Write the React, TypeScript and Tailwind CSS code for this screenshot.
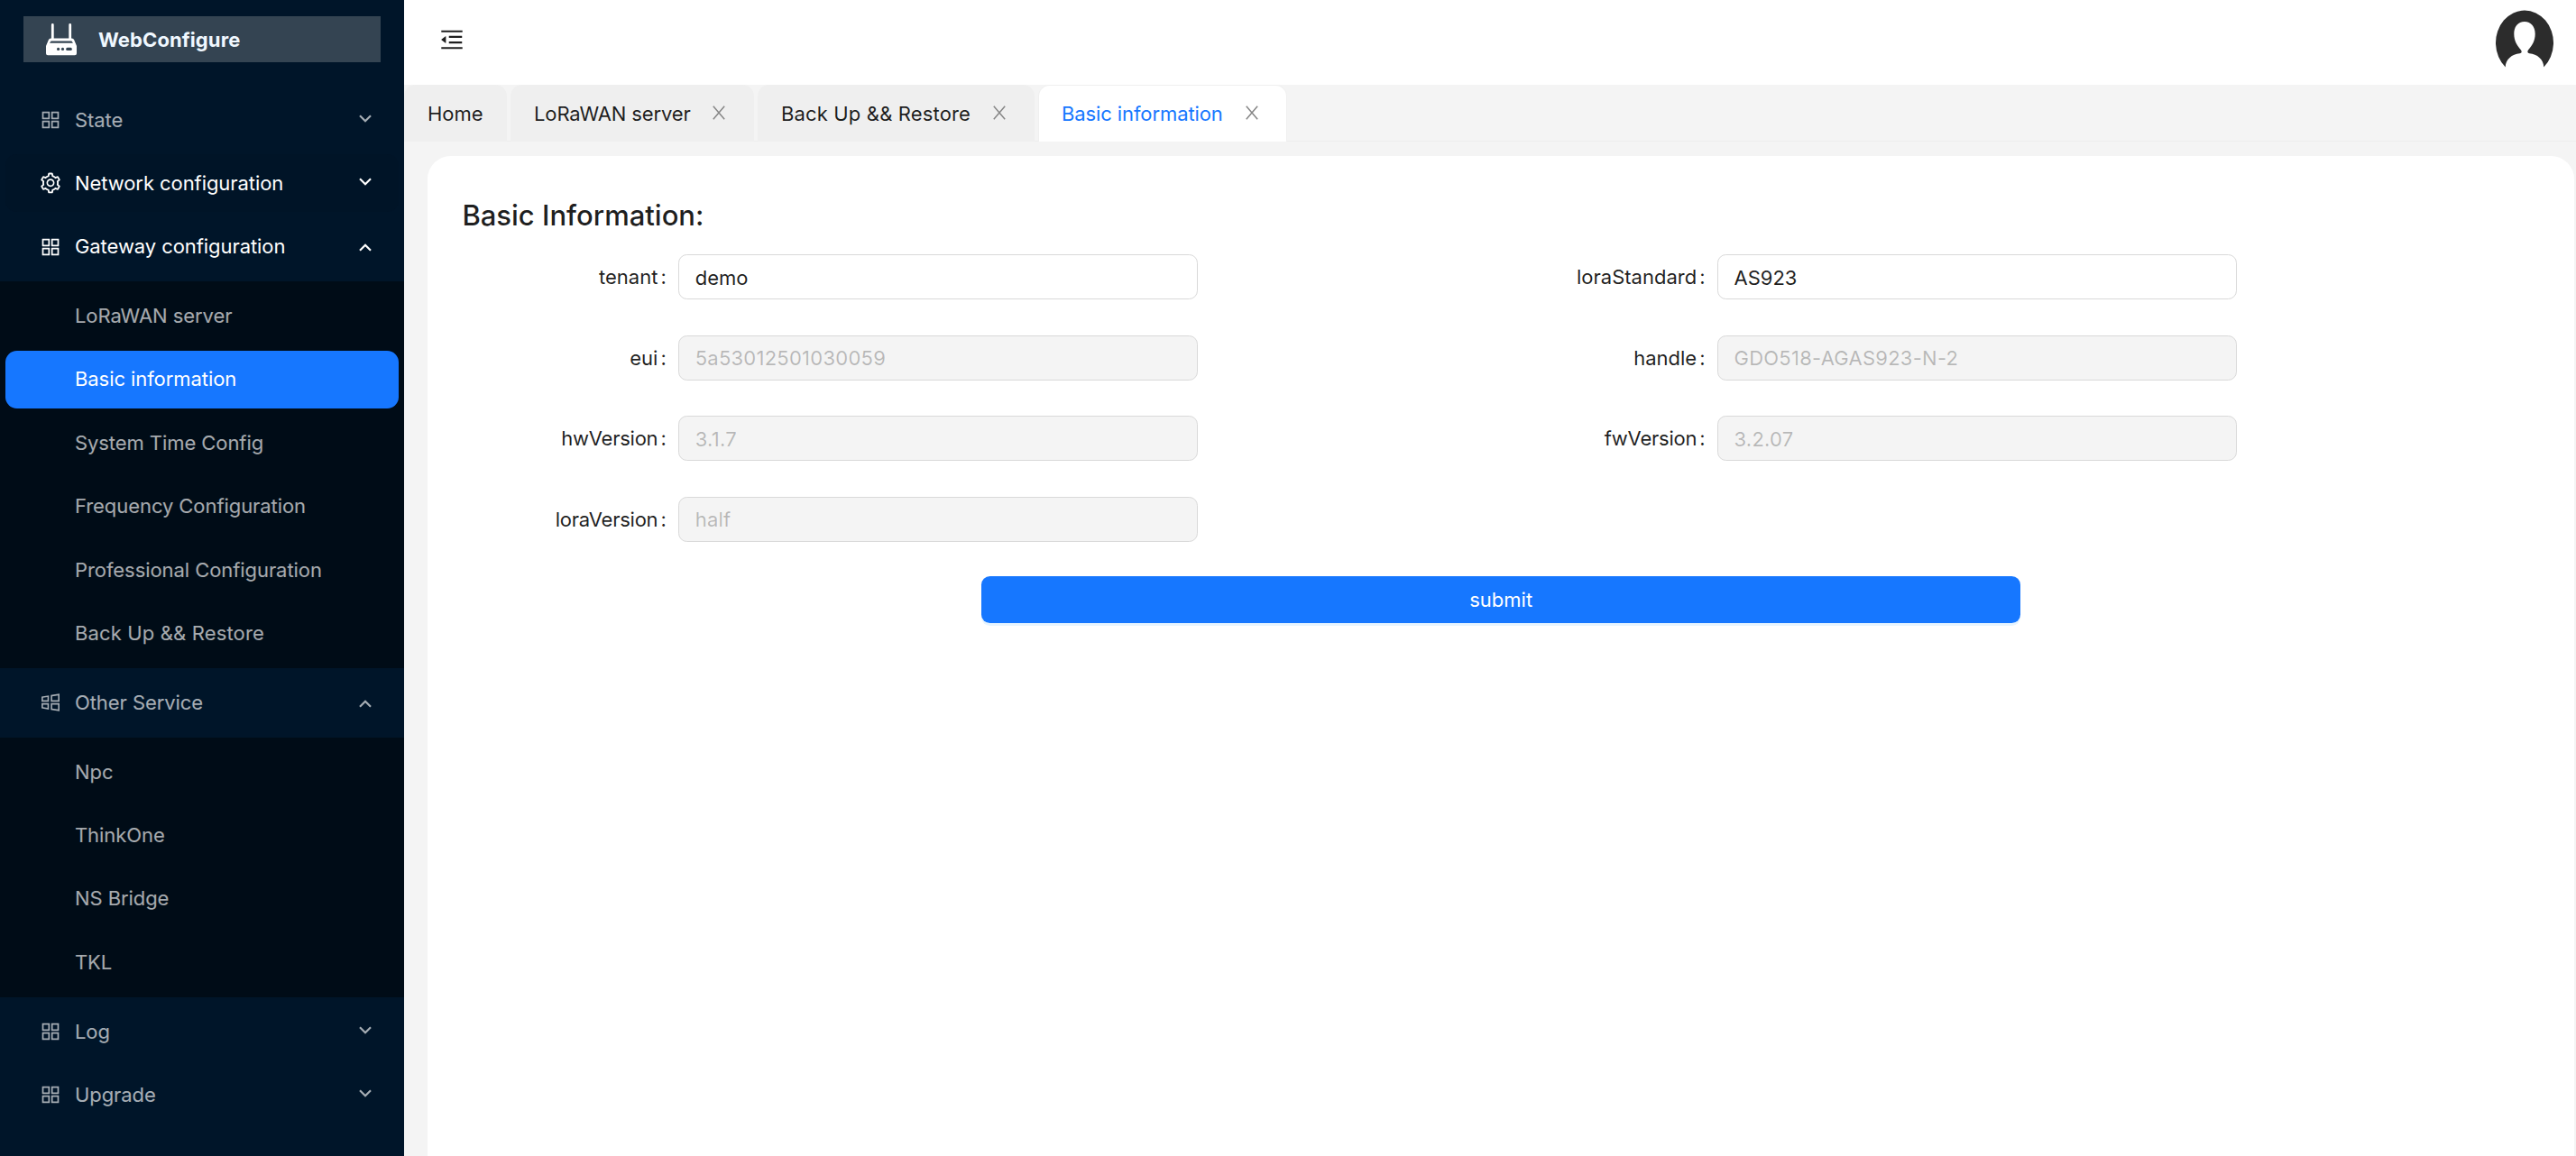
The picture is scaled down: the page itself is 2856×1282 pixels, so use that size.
import React, { useState } from 'react';
import { AiOutlineAppstore, AiOutlineMenuFold, AiOutlineSetting, AiOutlineWindows } from 'react-icons/ai';
import { clsx } from 'clsx';

interface MenuEntry {
  label: string;
  icon: React.ComponentType<{ className?: string }>;
  highlighted?: boolean;
  hovered?: boolean;
  children?: string[];
}

interface Tab {
  label: string;
  width: string;
  closable: boolean;
}

interface Field {
  name: string;
  value: string;
  disabled: boolean;
}

const menu: MenuEntry[] = [
  { label: 'State', icon: AiOutlineAppstore },
  { label: 'Network configuration', icon: AiOutlineSetting, highlighted: true, hovered: true },
  {
    label: 'Gateway configuration',
    icon: AiOutlineAppstore,
    highlighted: true,
    children: [
      'LoRaWAN server',
      'Basic information',
      'System Time Config',
      'Frequency Configuration',
      'Professional Configuration',
      'Back Up && Restore'
    ]
  },
  {
    label: 'Other Service',
    icon: AiOutlineWindows,
    children: ['Npc', 'ThinkOne', 'NS Bridge', 'TKL']
  },
  { label: 'Log', icon: AiOutlineAppstore },
  { label: 'Upgrade', icon: AiOutlineAppstore }
];

const tabs: Tab[] = [
  { label: 'Home', width: 'w-[114px]', closable: false },
  { label: 'LoRaWAN server', width: 'w-[270px] tracking-[-0.12px]', closable: true },
  { label: 'Back Up && Restore', width: 'w-[307px] tracking-[0.15px]', closable: true },
  { label: 'Basic information', width: 'w-[276px] tracking-[-0.1px]', closable: true }
];

const fields: Field[] = [
  { name: 'tenant', value: 'demo', disabled: false },
  { name: 'loraStandard', value: 'AS923', disabled: false },
  { name: 'eui', value: '5a53012501030059', disabled: true },
  { name: 'handle', value: 'GDO518-AGAS923-N-2', disabled: true },
  { name: 'hwVersion', value: '3.1.7', disabled: true },
  { name: 'fwVersion', value: '3.2.07', disabled: true },
  { name: 'loraVersion', value: 'half', disabled: true }
];

const RouterLogo = () => (
  <svg width="34" height="36" viewBox="0 0 34 36" className="shrink-0">
    <path d="M7.3 1.4V18M26.7 1.4V18" stroke="#fff" strokeWidth="2.8" strokeLinecap="round" />
    <path
      d="M5.5 16.5h23a3 3 0 0 1 2.8 2L34 25v8.3a2 2 0 0 1-2 2H2a2 2 0 0 1-2-2V25l2.7-6.5a3 3 0 0 1 2.8-2Z"
      fill="#fff"
    />
    <path d="M5.6 19.4h22.8l1.6 2.4H4Z" fill="#344452" />
    <circle cx="13.6" cy="28.4" r="1.6" fill="#344452" />
    <circle cx="18.5" cy="28.4" r="1.6" fill="#344452" />
    <path d="M23.7 28.4h3.6" stroke="#344452" strokeWidth="3.1" strokeLinecap="round" />
  </svg>
);

const Avatar = () => (
  <svg width="64" height="64" viewBox="0 0 64 64">
    <path
      d="M10.8 63.5A32 36 0 1 1 53.2 63.5C53.6 56 46 48.6 37.5 48.3C35.2 48 34.8 46.2 36 44.4C40.5 39.5 43.7 34 43.7 26.5C43.7 18.5 39 13 32 13S20.3 18.5 20.3 26.5C20.3 34 23.5 39.5 28 44.4C29.2 46.2 28.8 48 26.5 48.3C18 48.6 10.4 56 10.8 63.5Z"
      fill="#2c2c2c"
    />
  </svg>
);

const CloseIcon = () => (
  <svg width="14" height="16" viewBox="0 0 14 16" className="-mt-[2px]">
    <path d="M.8 .8L13.2 15.2M13.2 .8L.8 15.2" stroke="#868686" strokeWidth="1.5" />
  </svg>
);

const Chevron = ({ up }: { up: boolean }) => (
  <svg
    width="14"
    height="9"
    viewBox="0 0 14 9"
    fill="none"
    stroke="currentColor"
    strokeWidth="2.2"
    className={up ? 'mt-[2px]' : '-mt-[4px]'}
  >
    <path d={up ? 'M1 7.8L7 1.8L13 7.8' : 'M1 1.2L7 7.2L13 1.2'} />
  </svg>
);

const MenuSection = ({
  entry,
  selected,
  onSelect
}: {
  entry: MenuEntry;
  selected: string;
  onSelect: (label: string) => void;
}) => {
  const Icon = entry.icon;

  return (
    <>
      <div
        className={clsx(
          'mx-[6.4px] flex h-16 items-center rounded-[12.8px] pr-[30px] pl-[37px]',
          entry.highlighted ? 'text-white' : 'text-white/65',
          entry.hovered && 'bg-[#001427]'
        )}
      >
        <Icon className="size-[26px] shrink-0" />
        <span className="ml-[13.6px] flex-1">{entry.label}</span>
        <Chevron up={!!entry.children} />
      </div>
      {entry.children && (
        <div className="flex flex-col gap-[6.4px] bg-[#000c17] px-[6.4px] py-[6.4px]">
          {entry.children.map((child) => (
            <button
              key={child}
              onClick={() => onSelect(child)}
              className={clsx(
                'flex h-16 items-center rounded-[12.8px] pl-[76.6px] text-left',
                child === selected ? 'bg-[#1677ff] text-white' : 'text-white/65',
                child.includes('&&') && 'tracking-[0.15px]'
              )}
            >
              {child}
            </button>
          ))}
        </div>
      )}
    </>
  );
};

const FormField = ({ field }: { field: Field }) => (
  <div className="flex h-[50px] items-center">
    <label htmlFor={field.name} className="flex w-[239.7px] shrink-0 justify-end pt-px">
      <span className={clsx(field.name.endsWith('Version') && 'tracking-[-0.25px]')}>{field.name}</span>
      <span className="mr-[13.2px] ml-[3.2px]">:</span>
    </label>
    <input
      id={field.name}
      defaultValue={field.value}
      disabled={field.disabled}
      className="h-[50px] w-[576px] rounded-[9.6px] border border-[#d9d9d9] bg-white px-[17.6px] pt-px outline-none disabled:bg-[#f4f4f4] disabled:tracking-[0.25px] disabled:text-black/25"
    />
  </div>
);

export default function App() {
  const [selected, setSelected] = useState('Basic information');

  return (
    <div className="flex h-[1282px] w-full overflow-hidden bg-[#f4f4f4] font-[Inter,sans-serif] text-[22px] leading-[35px] text-black/88">
      {/* Sidebar */}
      <aside className="flex w-[448px] shrink-0 flex-col bg-[#001529] tracking-[-0.07px]">
        <div className="mx-[26px] mt-[18px] flex h-[51px] items-center bg-[#344452] pl-[25px]">
          <RouterLogo />
          <span className="mt-px ml-6 font-bold tracking-[0.1px] text-[#f0f8ff]">WebConfigure</span>
        </div>
        <nav className="mt-8 flex flex-col gap-[6.4px]">
          {menu.map((entry) => (
            <MenuSection key={entry.label} entry={entry} selected={selected} onSelect={setSelected} />
          ))}
        </nav>
      </aside>

      <div className="flex min-w-0 flex-1 flex-col">
        {/* Header */}
        <header className="flex h-[94px] shrink-0 items-center justify-between bg-white pr-[25px] pl-[38px]">
          <AiOutlineMenuFold className="-mt-[7px] size-[30px]" />
          <div className="-mt-2">
            <Avatar />
          </div>
        </header>

        {/* Opened pages */}
        <div className="flex h-[63px] shrink-0 gap-1 border-b border-[#ededed]">
          {tabs.map((tab) => (
            <div
              key={tab.label}
              className={clsx(
                'flex h-[63px] items-center justify-between rounded-t-[12.8px] border border-b-0 border-[#efefef] pr-[31px] pl-[25px]',
                tab.width,
                tab.label === selected ? 'bg-white text-[#1677ff]' : 'bg-[#efefef]'
              )}
            >
              <span className="whitespace-nowrap">{tab.label}</span>
              {tab.closable && <CloseIcon />}
            </div>
          ))}
        </div>

        {/* Page content */}
        <main className="mt-4 mr-[2px] ml-[26.4px] flex-1 rounded-t-[25.6px] bg-white px-[38px] pt-[38px]">
          <h1 className="mb-4 text-[31px] leading-[55px] font-medium">Basic Information:</h1>
          <form onSubmit={(e) => e.preventDefault()}>
            <div className="grid grid-cols-2 gap-y-[39.6px]">
              {fields.map((field) => (
                <FormField key={field.name} field={field} />
              ))}
            </div>
            <button
              type="submit"
              className="mx-auto mt-[38.4px] block h-[52px] w-1/2 rounded-[9.6px] bg-[#1677ff] pt-px text-white shadow-[0_3px_0_rgba(5,145,255,0.1)]"
            >
              submit
            </button>
          </form>
        </main>
      </div>
    </div>
  );
}
